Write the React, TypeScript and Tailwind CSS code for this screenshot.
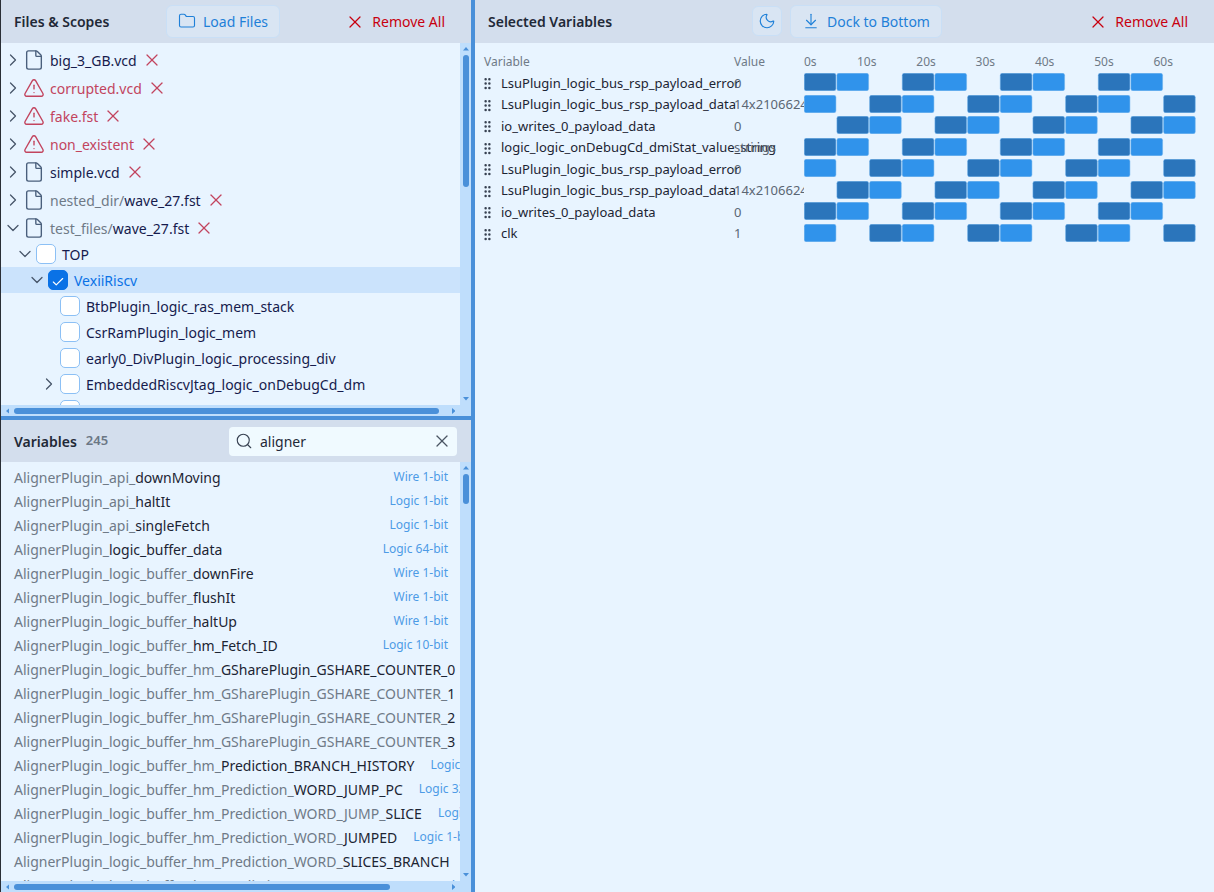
import React from "react";
import { ChevronRight, ChevronDown, File, TriangleAlert, X, Folder, Moon, ArrowDownToLine, Search, GripVertical, Check } from "lucide-react";

const FONT = "font-['Noto_Sans','Liberation_Sans',sans-serif]";

function Arrow({ dir }: { dir: "up" | "down" | "left" | "right" }) {
  const pts = { up: "0,3.5 3,0 6,3.5", down: "0,0 3,3.5 6,0", left: "3.5,0 0,3 3.5,6", right: "0,0 3.5,3 0,6" }[dir];
  const horiz = dir === "left" || dir === "right";
  return (
    <svg width={horiz ? 3.5 : 6} height={horiz ? 6 : 3.5} viewBox={horiz ? "0 0 3.5 6" : "0 0 6 3.5"} className="block">
      <polygon points={pts} fill="#4a90d9" />
    </svg>
  );
}

function VScroll({ thumbH }: { thumbH: string }) {
  return (
    <div className="w-[11px] shrink-0 bg-[#bfdefc] flex flex-col items-center">
      <div className="h-[12px] flex items-center justify-center shrink-0"><Arrow dir="up" /></div>
      <div className="flex-1 w-full flex flex-col items-center">
        <div className={`w-[6px] rounded-full bg-[#4a90d9] ${thumbH}`} />
      </div>
      <div className="h-[12px] flex items-center justify-center shrink-0"><Arrow dir="down" /></div>
    </div>
  );
}

function HScroll({ thumb }: { thumb: string }) {
  return (
    <div className="h-[11px] shrink-0 bg-[#bfdefc] flex items-center">
      <div className="w-[13px] flex items-center justify-center shrink-0"><Arrow dir="left" /></div>
      <div className="flex-1 flex items-center">
        <div className={`h-[6px] rounded-full bg-[#4a90d9] ${thumb}`} />
      </div>
      <div className="w-[13px] flex items-center justify-center shrink-0"><Arrow dir="right" /></div>
      <div className="w-[11px] shrink-0" />
    </div>
  );
}

function RemoveAll() {
  return (
    <button className="flex items-center gap-[7px] text-[14px] text-[#c8000f]">
      <X size={20} strokeWidth={1.5} />
      <span>Remove All</span>
    </button>
  );
}

function GhostButton({ children, cls }: { children: React.ReactNode; cls: string }) {
  return (
    <button className={`flex items-center justify-center rounded-[6px] border border-[#c9dff6] bg-[#d9e5f3] text-[14px] text-[#1f80d8] ${cls}`}>
      {children}
    </button>
  );
}

const files = [
  { pre: "", name: "big_3_GB.vcd", err: false, open: false },
  { pre: "", name: "corrupted.vcd", err: true, open: false },
  { pre: "", name: "fake.fst", err: true, open: false },
  { pre: "", name: "non_existent", err: true, open: false },
  { pre: "", name: "simple.vcd", err: false, open: false },
  { pre: "nested_dir/", name: "wave_27.fst", err: false, open: false },
  { pre: "test_files/", name: "wave_27.fst", err: false, open: true },
];

function FileRow({ f }: { f: (typeof files)[number] }) {
  return (
    <div className="h-[28px] flex items-center pl-[2px] shrink-0">
      {f.open ? (
        <ChevronDown size={20} strokeWidth={1.5} className="text-[#475569] shrink-0" />
      ) : (
        <ChevronRight size={20} strokeWidth={1.5} className="text-[#475569] shrink-0" />
      )}
      <span className="w-[22px] flex justify-center shrink-0">
        {f.err ? (
          <TriangleAlert size={22} strokeWidth={1.5} className="text-[#c2445e]" />
        ) : (
          <File size={22} strokeWidth={1.5} className="text-[#4a5f7c]" />
        )}
      </span>
      <span className={`ml-[5px] text-[14px] ${f.err ? "text-[#c2445e]" : "text-[#161b4d]"}`}>
        {f.pre && <span className="text-[#6f7a87]">{f.pre}</span>}
        {f.name}
      </span>
      <X size={20} strokeWidth={1.5} className="ml-[5px] text-[#c2445e] shrink-0" />
    </div>
  );
}

function Box({ checked }: { checked?: boolean }) {
  return (
    <span
      className={`w-[20px] h-[20px] rounded-[5px] shrink-0 flex items-center justify-center border ${
        checked ? "bg-[#0a72e6] border-[#0a72e6]" : "bg-white border-[#8cc0f5]"
      }`}
    >
      {checked && <Check size={14} strokeWidth={2} className="text-white mt-[3px]" />}
    </span>
  );
}

function ScopeRow({ pad, name, caret, selected }: { pad: string; name: string; caret?: "down" | "right"; selected?: boolean }) {
  return (
    <div className={`h-[26px] flex items-center shrink-0 ${pad} ${selected ? "bg-[#cbe3fc]" : ""}`}>
      <span className="w-[20px] shrink-0 flex justify-start">
        {caret === "down" && <ChevronDown size={20} strokeWidth={1.5} className="text-[#475569] ml-[-1px]" />}
        {caret === "right" && <ChevronRight size={20} strokeWidth={1.5} className="text-[#475569] ml-[-1px]" />}
      </span>
      <Box checked={selected} />
      <span className={`ml-[6px] text-[14px] whitespace-nowrap ${selected ? "text-[#0a72e6]" : "text-[#161b4d]"}`}>{name}</span>
    </div>
  );
}

const vars: [string, string, string][] = [
  ["AlignerPlugin_api_", "downMoving", "Wire 1-bit"],
  ["AlignerPlugin_api_", "haltIt", "Logic 1-bit"],
  ["AlignerPlugin_api_", "singleFetch", "Logic 1-bit"],
  ["AlignerPlugin_", "logic_buffer_data", "Logic 64-bit"],
  ["AlignerPlugin_logic_buffer_", "downFire", "Wire 1-bit"],
  ["AlignerPlugin_logic_buffer_", "flushIt", "Wire 1-bit"],
  ["AlignerPlugin_logic_buffer_", "haltUp", "Wire 1-bit"],
  ["AlignerPlugin_logic_buffer_", "hm_Fetch_ID", "Logic 10-bit"],
  ["AlignerPlugin_logic_buffer_hm_", "GSharePlugin_GSHARE_COUNTER_0", "Logic 2-bit"],
  ["AlignerPlugin_logic_buffer_hm_GSharePlugin_GSHARE_COUNTER_", "1", "Logic 2-bit"],
  ["AlignerPlugin_logic_buffer_hm_GSharePlugin_GSHARE_COUNTER_", "2", "Logic 2-bit"],
  ["AlignerPlugin_logic_buffer_hm_GSharePlugin_GSHARE_COUNTER_", "3", "Logic 2-bit"],
  ["AlignerPlugin_logic_buffer_hm_", "Prediction_BRANCH_HISTORY", "Logic 12-bit"],
  ["AlignerPlugin_logic_buffer_hm_Prediction_", "WORD_JUMP_PC", "Logic 32-bit"],
  ["AlignerPlugin_logic_buffer_hm_Prediction_WORD_JUMP_", "SLICE", "Logic 1-bit"],
  ["AlignerPlugin_logic_buffer_hm_Prediction_WORD_", "JUMPED", "Logic 1-bit"],
  ["AlignerPlugin_logic_buffer_hm_Prediction_WORD_", "SLICES_BRANCH", "Logic 2-bit"],
  ["AlignerPlugin_logic_buffer_hm_Prediction_WORD_", "SLICES_TAKEN", "Logic 2-bit"],
];

const signals: [string, string, number][] = [
  ["LsuPlugin_logic_bus_rsp_payload_error", "0", 0],
  ["LsuPlugin_logic_bus_rsp_payload_data", "14x2106624", 1],
  ["io_writes_0_payload_data", "0", 2],
  ["logic_logic_onDebugCd_dmiStat_value_string", "strings", 0],
  ["LsuPlugin_logic_bus_rsp_payload_error", "0", 1],
  ["LsuPlugin_logic_bus_rsp_payload_data", "14x2106624", 2],
  ["io_writes_0_payload_data", "0", 0],
  ["clk", "1", 1],
];

const CELL = 98 / 3;
function Wave({ phase }: { phase: number }) {
  const cells = Array.from({ length: 12 }, (_, i) => (i + phase) % 3);
  return (
    <svg width={392} height={18} viewBox="0 0 392 18" className="block shrink-0 relative">
      {cells.map((c, i) =>
        c === 2 ? null : (
          <rect
            key={i}
            x={i * CELL + 0.25}
            y={0.25}
            width={CELL - 1}
            height={17.5}
            rx={2}
            fill={c === 0 ? "#2b75bb" : "#3093eb"}
            stroke="#6db0ec"
            strokeWidth={0.5}
          />
        )
      )}
    </svg>
  );
}

export default function App() {
  return (
    <div className={`${FONT} w-[1214px] h-[892px] flex overflow-hidden bg-[#e8f4ff]`}>
      <div className="w-[1px] bg-[#2a2f36] shrink-0" />
      {/* Left column */}
      <div className="w-[470px] shrink-0 flex flex-col h-full">
        {/* Files & scopes */}
        <div className="h-[416px] shrink-0 flex flex-col">
          <div className="h-[43px] shrink-0 bg-[#d3deed] flex items-center pl-[13px] pr-[26px]">
            <span className="text-[14px] font-semibold text-[#1f2937] w-[152px]">Files &amp; Scopes</span>
            <GhostButton cls="h-[33px] w-[114px] gap-[7px] mt-[-1px]">
              <Folder size={18} strokeWidth={1.5} />
              <span>Load Files</span>
            </GhostButton>
            <div className="ml-auto"><RemoveAll /></div>
          </div>
          <div className="flex-1 flex min-h-0">
            <div className="flex-1 min-w-0 overflow-hidden pt-[3px] flex flex-col">
              {files.map((f, i) => <FileRow key={i} f={f} />)}
              <div className="flex flex-col mt-[-1px]">
                <ScopeRow pad="pl-[15px]" name="TOP" caret="down" />
                <ScopeRow pad="pl-[27px]" name="VexiiRiscv" caret="down" selected />
                <ScopeRow pad="pl-[39px]" name="BtbPlugin_logic_ras_mem_stack" />
                <ScopeRow pad="pl-[39px]" name="CsrRamPlugin_logic_mem" />
                <ScopeRow pad="pl-[39px]" name="early0_DivPlugin_logic_processing_div" />
                <ScopeRow pad="pl-[39px]" name="EmbeddedRiscvJtag_logic_onDebugCd_dm" caret="right" />
                <ScopeRow pad="pl-[39px]" name="execute_ctrl_0_up_logic_bus_rsp_payload_data_stage" />
              </div>
            </div>
            <VScroll thumbH="h-[132px]" />
          </div>
          <HScroll thumb="w-[425px]" />
        </div>
        <div className="h-[4px] shrink-0 bg-[#4a90d9]" />
        {/* Variables */}
        <div className="flex-1 min-h-0 flex flex-col">
          <div className="h-[42px] shrink-0 bg-[#d3deed] flex items-center pl-[13px] pr-[14px]">
            <span className="text-[14px] font-semibold text-[#1f2937]">Variables</span>
            <span className="ml-[9px] text-[13px] font-semibold text-[#6b7785]">245</span>
            <div className="ml-auto w-[228px] h-[29px] rounded-[4px] bg-[#f0faff] flex items-center pl-[6px] pr-[5px]">
              <Search size={18} strokeWidth={1.5} className="text-[#374151] shrink-0" />
              <span className="ml-[7px] text-[14px] text-[#1f2937] flex-1">aligner</span>
              <X size={20} strokeWidth={1.5} className="text-[#4b5563]" />
            </div>
          </div>
          <div className="flex-1 flex min-h-0">
            <div className="flex-1 min-w-0 overflow-hidden pt-[3px] flex flex-col">
              {vars.map(([p, n, t], i) => (
                <div key={i} className="h-[24px] shrink-0 flex items-center pl-[13px] pr-[12px] whitespace-nowrap">
                  <span className="text-[14px] text-[#6f7a87] shrink-0">
                    {p}
                    <span className="text-[#1c2433]">{n}</span>
                  </span>
                  <span className="ml-auto pl-[16px] text-[12px] text-[#4d9be6] shrink-0">{t}</span>
                </div>
              ))}
            </div>
            <VScroll thumbH="h-[30px]" />
          </div>
          <HScroll thumb="w-[376px]" />
        </div>
      </div>
      <div className="w-[4px] shrink-0 bg-[#4a90d9]" />
      {/* Right column */}
      <div className="flex-1 min-w-0 flex flex-col">
        <div className="h-[43px] shrink-0 bg-[#d3deed] flex items-center pl-[13px] pr-[26px]">
          <span className="text-[14px] font-semibold text-[#1f2937] w-[264px]">Selected Variables</span>
          <GhostButton cls="h-[30px] w-[30px] mt-[-1px]">
            <Moon size={18} strokeWidth={1.5} />
          </GhostButton>
          <GhostButton cls="h-[33px] w-[152px] gap-[7px] ml-[8px] mt-[-1px]">
            <ArrowDownToLine size={18} strokeWidth={1.5} />
            <span>Dock to Bottom</span>
          </GhostButton>
          <div className="ml-auto"><RemoveAll /></div>
        </div>
        <div className="pt-[9px] pl-[9px]">
          <div className="flex items-center h-[19px] text-[12px] text-[#6f7a87]">
            <span className="w-[250px] shrink-0">Variable</span>
            <span className="w-[70px] shrink-0">Value</span>
            <div className="flex">
              {["0s", "10s", "20s", "30s", "40s", "50s", "60s"].map((t, i) => (
                <span key={t} className={i === 0 ? "w-[53px]" : "w-[59.3px]"}>{t}</span>
              ))}
            </div>
          </div>
          <div className="mt-[2px] flex flex-col gap-[3.5px]">
            {signals.map(([n, v, ph], i) => (
              <div key={i} className="flex items-center h-[18px] text-[13px] text-[#1c2433]">
                <span className="w-[250px] shrink-0 flex items-center whitespace-nowrap">
                  <GripVertical size={15} strokeWidth={2} className="text-[#374151] shrink-0 ml-[-4px] mr-[6px] mt-[3px]" />
                  <span className="mt-[3px]">{n}</span>
                </span>
                <span className="w-[70px] shrink-0 text-[#5b6673] whitespace-nowrap overflow-hidden mt-[3px]">{v}</span>
                <Wave phase={ph} />
              </div>
            ))}
          </div>
        </div>
      </div>
    </div>
  );
}
